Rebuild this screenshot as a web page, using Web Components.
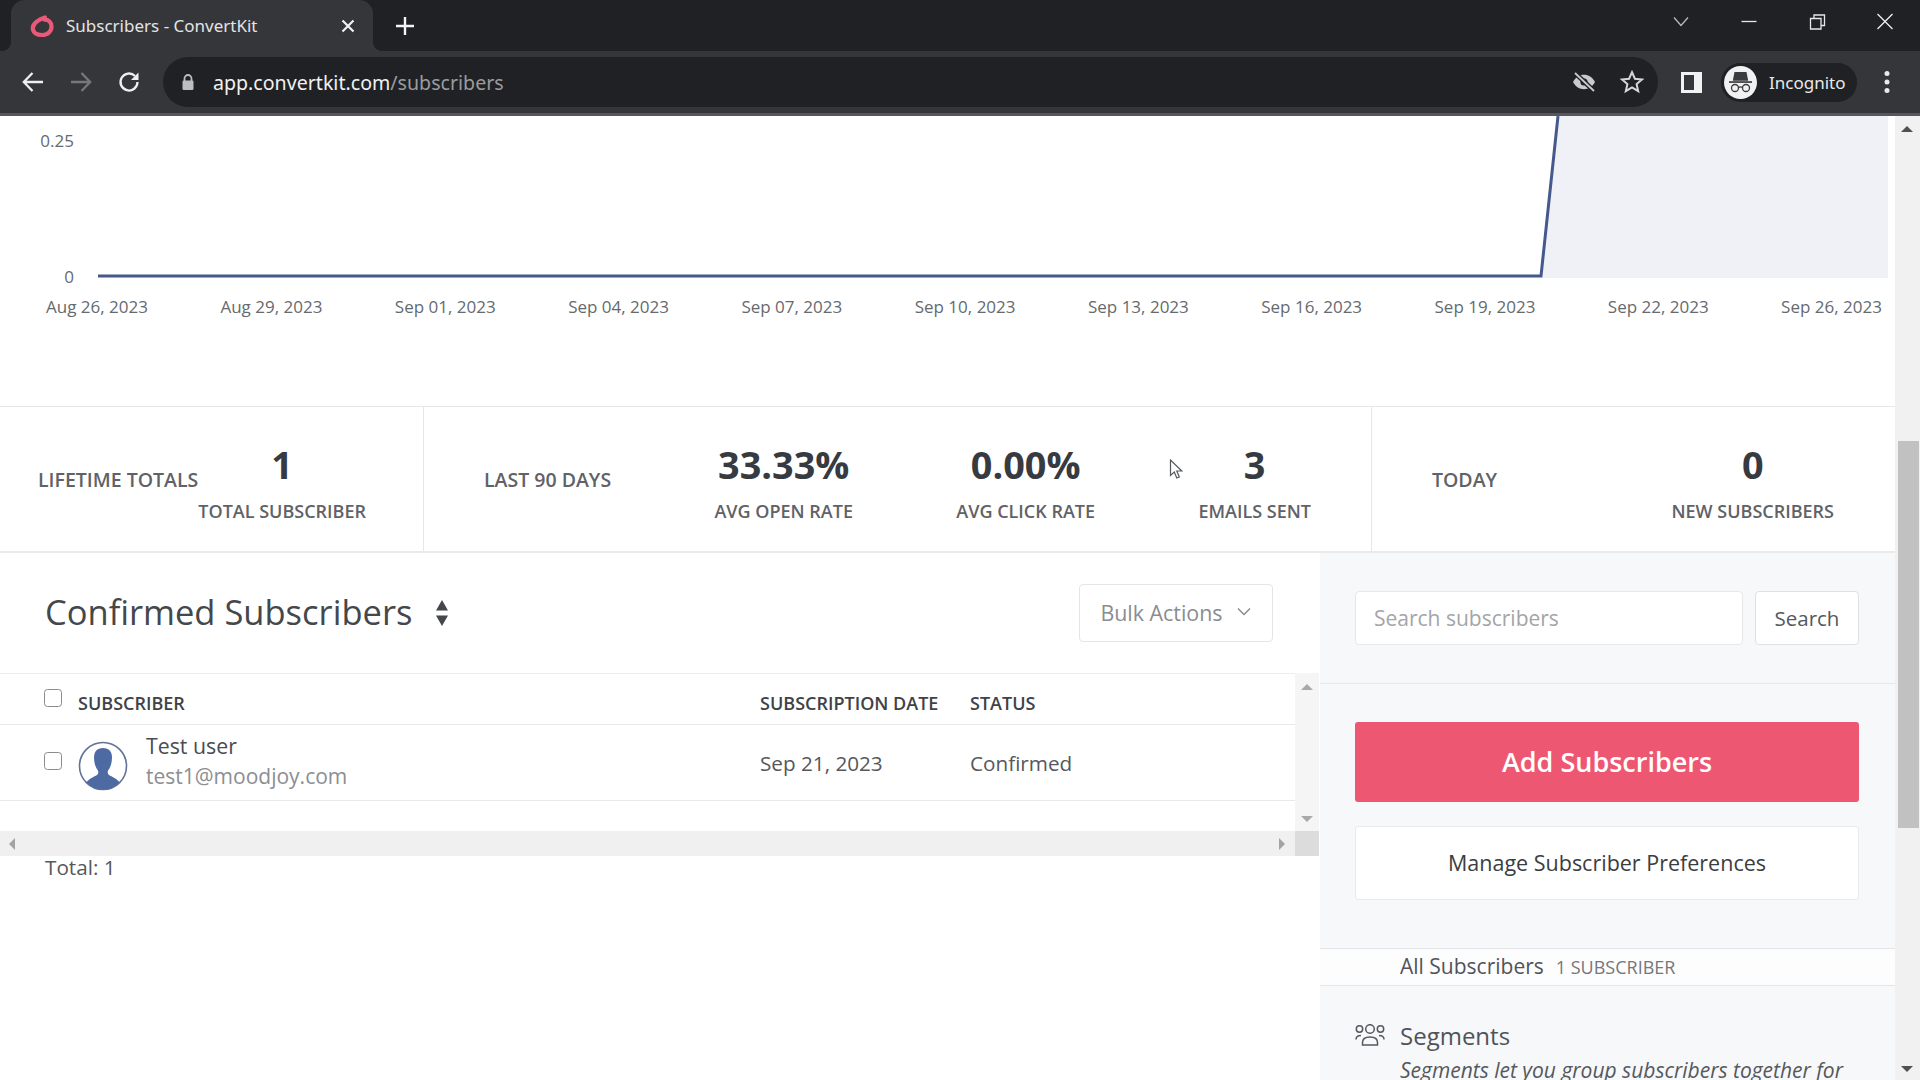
<!DOCTYPE html>
<html lang="en">
<head>
<meta charset="utf-8">
<title>Subscribers - ConvertKit</title>
<style>
html,body{margin:0;padding:0;height:100%;overflow:hidden;background:#fff;font-family:"Open Sans",sans-serif}
</style>
</head>
<body>
<app-shell></app-shell>
<script>
function def(name, html){
  customElements.define(name, class extends HTMLElement{
    constructor(){super();const r=this.attachShadow({mode:'open'});r.innerHTML=html;}
  });
}
function defAttr(name, fn){
  customElements.define(name, class extends HTMLElement{
    connectedCallback(){ if(this.shadowRoot) return; const r=this.attachShadow({mode:'open'}); r.innerHTML=fn(this); }
  });
}

def('browser-tabstrip',`<style>
:host{display:flex;height:51px;background:#202124;align-items:stretch;color:#e8eaed;font:16px "Noto Sans","Open Sans",sans-serif;flex:none}
.tab{margin-left:11px;width:362px;background:#35363a;border-radius:14px 14px 0 0;display:flex;align-items:center;position:relative;box-sizing:border-box;padding-left:19px}
.tab::before,.tab::after{content:"";position:absolute;bottom:0;width:10px;height:10px;background:radial-gradient(circle at 0 0,#202124 10px,#35363a 10.5px)}
.tab::before{left:-10px}
.tab::after{right:-10px;background:radial-gradient(circle at 100% 0,#202124 10px,#35363a 10.5px)}
.fav{width:24px;height:24px;flex:none}
.title{margin-left:12px;flex:1;white-space:nowrap;font-size:17px;color:#e3e4e6}
.x{width:16px;height:16px;margin-right:17px;flex:none}
.plus{margin-left:22px;align-self:center;width:20px;height:20px;flex:none}
.sp{flex:1}
.win{display:flex;align-items:flex-start;padding-right:23px}
.win svg{display:block;width:24px;height:24px;margin-top:10px}
.win svg+svg{margin-left:44.5px}
</style>
<div class="tab">
<svg class="fav" viewBox="0 0 24 24"><path d="M15 3.500C10 5 2.800 9 2.800 14c0 4.500 4 7 9.200 7 6 0 9.500-4 9.500-8.500 0-4-3-6.800-7-6.800" fill="none" stroke="#ea5a78" stroke-width="4.200" stroke-linecap="round"/></svg>
<span class="title">Subscribers - ConvertKit</span>
<svg class="x" viewBox="0 0 16 16"><path d="M2.500 2.500l11 11M13.500 2.500l-11 11" stroke="#f1f1f2" stroke-width="2.200" fill="none"/></svg>
</div>
<svg class="plus" viewBox="0 0 20 20"><path d="M10 1v18M1 10h18" stroke="#f4f4f5" stroke-width="2.400" fill="none"/></svg>
<div class="sp"></div>
<div class="win">
<svg viewBox="0 0 24 24"><path d="M5 7.500l7 8 7-8" stroke="#bdbec0" stroke-width="1.200" fill="none"/></svg>
<svg viewBox="0 0 24 24"><path d="M4.500 11.500h15" stroke="#e8e8e9" stroke-width="1.300" fill="none"/></svg>
<svg viewBox="0 0 24 24" style="margin-left:43.500px"><path d="M5.500 8.500h10.500v10.500H5.500zM9 8.500V5h10.500v10.500H16" stroke="#e8e8e9" stroke-width="1.300" fill="none"/></svg>
<svg viewBox="0 0 24 24"><path d="M4.500 4l15 15M19.500 4l-15 15" stroke="#efeff0" stroke-width="1.300" fill="none"/></svg>
</div>`);

def('browser-toolbar',`<style>
:host{display:flex;height:62px;background:#35363a;border-bottom:3px solid #56575a;align-items:center;font:19.600px "Noto Sans","Open Sans",sans-serif;flex:none;position:relative}
.nav{width:24px;height:24px;flex:none}
.omni{margin-left:22px;width:1495px;height:50px;flex:none;box-sizing:border-box;border-radius:25px;background:#202124;display:flex;align-items:center;padding-left:17px}
.lock{width:16px;height:18px;flex:none}
.url{margin-left:17px;color:#f0f1f1;flex:1;white-space:nowrap}
.url span{color:#9b9c9f}
.eye{width:26px;height:26px;flex:none;margin-right:22px}
.star{width:26px;height:26px;flex:none;margin-right:13px}
.side{width:21px;height:21px;flex:none;margin-left:23px}
.pill{margin-left:19px;width:136px;height:39px;border-radius:20px;background:#202124;display:flex;align-items:center;flex:none;font-size:17px;color:#e8e9ea}
.av{width:33px;height:33px;margin-left:3px;flex:none}
.pill span{margin-left:12px}
.dots{width:6px;height:24px;margin-left:27px;flex:none}
</style>
<svg class="nav" style="margin-left:21px" viewBox="0 0 24 24"><path d="M22 12H3M11.500 3L2.800 12l8.700 9" stroke="#eeeff0" stroke-width="2.300" fill="none"/></svg>
<svg class="nav" style="margin-left:24px" viewBox="0 0 24 24"><path d="M2 12h19M12.500 3l8.700 9-8.700 9" stroke="#77787b" stroke-width="2.300" fill="none"/></svg>
<svg class="nav" style="margin-left:24px" viewBox="0 0 24 24"><path d="M20.500 12a8.500 8.500 0 1 1-2.500-6" stroke="#eeeff0" stroke-width="2.300" fill="none"/><path d="M21.500 2.500v7.500H14z" fill="#eeeff0"/></svg>
<div class="omni">
<svg class="lock" viewBox="0 0 16 18"><path d="M4.500 8V5.500a3.500 3.500 0 0 1 7 0V8" stroke="#bdbec0" stroke-width="1.800" fill="none"/><rect x="2.500" y="7.500" width="11" height="9.500" rx="1.300" fill="#bdbec0"/></svg>
<div class="url">app.convertkit.com<span>/subscribers</span></div>
<svg class="eye" viewBox="0 0 26 26"><path d="M2 13c2.800-4.800 6.500-7.200 11-7.200S21.200 8.200 24 13c-2.800 4.800-6.500 7.200-11 7.200S4.800 17.800 2 13z" fill="#c9cacc"/><circle cx="13" cy="13" r="3.600" fill="#202124"/><path d="M4 4l19 18" stroke="#202124" stroke-width="4.500"/><path d="M4 4l19 18" stroke="#c9cacc" stroke-width="1.800"/></svg>
<svg class="star" viewBox="0 0 26 26"><path d="M13 3.200l2.900 6.500 7.100.7-5.400 4.700 1.600 7-6.200-3.700-6.200 3.700 1.600-7L3 10.400l7.100-.7z" stroke="#d6d7d8" stroke-width="2" fill="none"/></svg>
</div>
<svg class="side" viewBox="0 0 21 21"><path fill-rule="evenodd" d="M0 0h21v21H0zM3 3v15h10V3z" fill="#f2f2f3"/></svg>
<div class="pill">
<svg class="av" viewBox="0 0 33 33"><circle cx="16.500" cy="16.500" r="16.500" fill="#f1f1f2"/><path d="M10.500 6h12l1.700 8.700H8.800z" fill="#3a3b3e"/><rect x="5" y="15.200" width="23" height="1.700" fill="#3a3b3e"/><circle cx="11" cy="22" r="3.500" fill="none" stroke="#3a3b3e" stroke-width="1.300"/><circle cx="22" cy="22" r="3.500" fill="none" stroke="#3a3b3e" stroke-width="1.300"/><path d="M14.500 21.500c1.200-.7 2.800-.7 4 0" stroke="#3a3b3e" stroke-width="1.200" fill="none"/></svg>
<span>Incognito</span>
</div>
<svg class="dots" viewBox="0 0 6 24"><circle cx="3" cy="3.500" r="2.500" fill="#eaeaeb"/><circle cx="3" cy="12" r="2.500" fill="#eaeaeb"/><circle cx="3" cy="20.500" r="2.500" fill="#eaeaeb"/></svg>`);

def('page-scrollbar',`<style>
:host{display:flex;flex-direction:column;width:25px;background:#f1f1f1;flex:none;align-items:center;box-sizing:border-box}
.a{width:0;height:0;flex:none;border-left:6px solid transparent;border-right:6px solid transparent;margin-left:-2px}
.up{border-bottom:6px solid #505050;margin-top:10px}
.thumb{width:21px;height:387px;background:#c1c1c1;margin-top:309px;flex:none;margin-left:2px}
.dn{border-top:6px solid #505050;margin-top:auto;margin-bottom:8px}
</style><div class="a up"></div><div class="thumb"></div><div class="a dn"></div>`);

const dates=['Aug 26, 2023','Aug 29, 2023','Sep 01, 2023','Sep 04, 2023','Sep 07, 2023','Sep 10, 2023','Sep 13, 2023','Sep 16, 2023','Sep 19, 2023','Sep 22, 2023','Sep 26, 2023'];
def('sub-chart',`<style>
:host{display:block;height:290px;border-bottom:1px solid #e6e7e8;box-sizing:content-box;font:17px "Open Sans",sans-serif;color:#666a6e;flex:none;overflow:hidden}
svg{display:block;width:1895px;height:172px}
text{font:17px "Open Sans",sans-serif;fill:#666a6e}
.dates{display:flex;justify-content:space-between;padding:7px 13px 0 46px;white-space:nowrap;line-height:23px}
</style>
<svg viewBox="0 0 1895 172">
<polygon points="1541,162 1558,0 1888,0 1888,162" fill="#f0f1f6"/>
<text x="74" y="31" text-anchor="end">0.25</text>
<text x="74" y="167" text-anchor="end">0</text>
<polyline points="98,160 1541,160 1558,0" fill="none" stroke="#46598c" stroke-width="3"/>
</svg>
<div class="dates">${dates.map(d=>`<span>${d}</span>`).join('')}</div>`);

defAttr('stat-item',el=>`<style>
:host{display:flex;flex-direction:column;align-items:center;white-space:nowrap;color:#5f6266}
b{font:700 37.800px/52px "Open Sans",sans-serif;color:#373a40;display:block;height:52px}
span{font:600 18px/22px "Open Sans",sans-serif;margin-top:9px;color:#5f6266}
</style><b>${el.getAttribute('value')}</b><span>${el.getAttribute('label')}</span>`);

def('stat-group',`<style>
:host{display:flex;align-items:center;justify-content:space-between;box-sizing:border-box;padding:0 60px;height:100%;font:600 19.500px "Open Sans",sans-serif;color:#5f6266;white-space:nowrap;border-right:1px solid #e6e7e8}
:host([first]){padding-left:38px;width:424px;flex:none}
:host([mid]){width:948px;flex:none}
:host([last]){flex:1;border-right:0;padding-right:61px}
::slotted(stat-item){margin-top:3px}
</style><slot></slot>`);

def('stats-bar',`<style>
:host{display:flex;height:144px;border-bottom:2px solid #e9eaeb;flex:none;box-sizing:content-box}
</style><slot></slot>`);

def('subscribers-panel',`<style>
:host{display:block;width:1320px;flex:none;font-family:"Open Sans",sans-serif;color:#47494d}
.head{height:120px;box-sizing:border-box;display:flex;align-items:center;padding:0 47px 3px 45px}
h1{margin:0;font:400 34.500px/44px "Open Sans",sans-serif;color:#44474b;white-space:nowrap}
.sort{width:14px;height:26px;margin-left:23px;flex:none;margin-top:3px}
.bulk{margin-left:auto;width:194px;height:58px;box-sizing:border-box;border:1px solid #e4e5e7;border-radius:4px;display:flex;align-items:center;justify-content:center;gap:13px;font-size:21.400px;color:#8a8c90;padding-bottom:2px;margin-top:3px}
.bulk svg{width:16px;height:10px}
.tablewrap{display:flex;height:158px}
.table{width:1295px;flex:none}
.row{display:grid;grid-template-columns:78px 682px 210px 1fr;border-bottom:1px solid #e8e9ea;align-items:center;box-sizing:border-box}
.row.h{height:52px;border-top:1px solid #eceded;font:600 18px/22px "Open Sans",sans-serif;color:#3f4246;padding-top:7px}
.row.b{height:76px;font-size:20.700px;color:#55585c}
.cb{width:18px;height:18px;box-sizing:border-box;border:1.500px solid #8b8b8b;border-radius:3.500px;margin-left:44px;background:#fff}
.row.h .cb{margin-top:-10px}
.row.b .cb{margin-top:-3px}
.user{display:flex;align-items:center}
.user svg{width:50px;height:50px;flex:none;margin-top:7px}
.nm{margin-left:18px;line-height:30px}
.nm b{display:block;font-weight:400;color:#4a4c50;margin-top:-4px;font-size:21.300px}
.nm i{display:block;font-style:normal;color:#8c8e92;font-size:21px}
.vs{width:24px;background:#f5f5f6;display:flex;flex-direction:column;align-items:center;flex:none;height:158px;margin-right:1px}
.vs .a{width:0;height:0;border-left:6px solid transparent;border-right:6px solid transparent}
.vs .a.u{border-bottom:6px solid #a9a9a9;margin-top:11px}
.vs .a.d{border-top:6px solid #a9a9a9;margin-top:auto;margin-bottom:9px}
.hs{display:flex;height:25px;background:#f0f0f0;width:1319px}
.hs .t{flex:1;display:flex;align-items:center;justify-content:space-between;padding:0 35px 0 9px}
.hs .a{width:0;height:0;border-top:6px solid transparent;border-bottom:6px solid transparent}
.hs .l{border-right:6px solid #a3a3a3}
.hs .r{border-left:6px solid #a3a3a3;margin-right:-25px}
.hs .c{width:24px;background:#dcdcdc}
.tot{padding-left:45px;font-size:20.700px;line-height:24px;margin-top:-1px;color:#55585c}
</style>
<div class="head">
<h1>Confirmed Subscribers</h1>
<svg class="sort" viewBox="0 0 14 26"><path d="M7 0l6 10.500H1zM7 26l6-10.500H1z" fill="#44474b"/></svg>
<div class="bulk">Bulk Actions <svg viewBox="0 0 16 10"><path d="M2 1.500l6 6 6-6" fill="none" stroke="#8a8c90" stroke-width="1.500"/></svg></div>
</div>
<div class="tablewrap">
<div class="table">
<div class="row h"><div class="cb"></div><div>SUBSCRIBER</div><div>SUBSCRIPTION DATE</div><div>STATUS</div></div>
<div class="row b"><div class="cb"></div><div class="user">
<svg viewBox="0 0 50 50"><defs><clipPath id="c"><circle cx="25" cy="25" r="23.500"/></clipPath></defs><circle cx="25" cy="25" r="23.500" fill="#fff" stroke="#617397" stroke-width="1.600"/><path clip-path="url(#c)" d="M25 7c-6 0-9 3.800-9 9.500 0 5 1.300 9.500 3.800 12.800 .7 .9 .7 3.300-.3 4.200C17 36 7 37.500 4 50h42c-3-12.500-13-14-15.500-16.500-1-.9-1-3.300-.3-4.200C32.700 26 34 21.500 34 16.500 34 10.800 31 7 25 7z" fill="#4d6aa3"/></svg>
<div class="nm"><b>Test user</b><i>test1@moodjoy.com</i></div></div>
<div>Sep 21, 2023</div><div>Confirmed</div></div>
</div>
<div class="vs"><div class="a u"></div><div class="a d"></div></div>
</div>
<div class="hs"><div class="t"><div class="a l"></div><div class="a r"></div></div><div class="c"></div></div>
<div class="tot">Total: 1</div>`);

def('subscribers-sidebar',`<style>
:host{display:block;flex:1;min-width:0;background:#f7f8fa;font-family:"Open Sans",sans-serif;color:#47494d;height:100%;overflow:hidden}
.search{height:131px;box-sizing:border-box;border-bottom:1px solid #e6e7ea;display:flex;padding:38px 36px 0 35px;gap:12px;align-items:flex-start}
.input{width:388px;height:54px;box-sizing:border-box;background:#fff;border:1px solid #e6e7ea;border-radius:4px;display:flex;align-items:center;padding:0 0 1px 18px;font-size:21px;color:#a3a5a9}
.btn{flex:1;height:54px;box-sizing:border-box;background:#fff;border:1px solid #dfe0e3;border-radius:4px;display:flex;align-items:center;justify-content:center;font-size:20.500px;color:#55585c;padding-bottom:1px}
.acts{padding:38px 36px 0 35px;display:flex;flex-direction:column}
.add{height:80px;background:#ee5771;color:#fff;border-radius:3px;display:flex;align-items:center;justify-content:center;font-weight:600;font-size:27px;padding-bottom:2px;box-sizing:border-box}
.mg{height:74px;margin-top:24px;background:#fff;border:1px solid #e9eaec;border-radius:3px;box-sizing:border-box;display:flex;align-items:center;justify-content:center;font-size:21.500px;color:#3b3d41;font-weight:500;padding-bottom:1px}
.all{margin-top:48px;height:38px;box-sizing:border-box;background:#fdfdfe;border-top:1px solid #e4e5e8;border-bottom:1px solid #e4e5e8;display:flex;align-items:center;padding:0 0 2px 80px;font-size:21px;color:#50535a;white-space:nowrap}
.all small{font-size:18px;margin-left:12px;color:#74777b;margin-top:2px}
.seg{display:flex;align-items:center;margin-top:32px;padding-left:35px;font-size:24px;line-height:36px;color:#50535a}
.seg svg{width:30px;height:22px;flex:none;margin-right:15px;margin-top:-3px}
.note{padding-left:80px;font-style:italic;font-size:21px;line-height:30px;color:#55585c;white-space:nowrap;margin-top:1px}
</style>
<div class="search"><div class="input">Search subscribers</div><div class="btn">Search</div></div>
<div class="acts"><div class="add">Add Subscribers</div><div class="mg">Manage Subscriber Preferences</div></div>
<div class="all">All Subscribers<small>1 SUBSCRIBER</small></div>
<div class="seg"><svg viewBox="0 0 30 22" fill="none" stroke="#55585c" stroke-width="1.500"><circle cx="15" cy="5" r="4.300"/><circle cx="4.500" cy="5" r="3.200"/><circle cx="25.500" cy="5" r="3.200"/><path d="M7.500 21v-2.500c0-4 3-5.500 7.500-5.500s7.500 1.500 7.500 5.500V21zM1 15.500c0-2.500 2-4 5-4M29 15.500c0-2.500-2-4-5-4"/></svg>Segments</div>
<div class="note">Segments let you group subscribers together for</div>`);

def('subscribers-page',`<style>
:host{display:flex;flex:1;min-height:0;overflow:hidden;background:#fff}
.col{flex:1;min-width:0;display:flex;flex-direction:column}
.split{display:flex;flex:1;min-height:0}
.cursor{position:absolute;left:1169px;top:459px;width:14px;height:21px;pointer-events:none}
</style>
<div class="col"><sub-chart></sub-chart>
<stats-bar>
<stat-group first>LIFETIME TOTALS<stat-item value="1" label="TOTAL SUBSCRIBER"></stat-item></stat-group>
<stat-group mid>LAST 90 DAYS<stat-item value="33.33%" label="AVG OPEN RATE"></stat-item><stat-item value="0.00%" label="AVG CLICK RATE"></stat-item><stat-item value="3" label="EMAILS SENT"></stat-item></stat-group>
<stat-group last>TODAY<stat-item value="0" label="NEW SUBSCRIBERS"></stat-item></stat-group>
</stats-bar>
<div class="split"><subscribers-panel></subscribers-panel><subscribers-sidebar></subscribers-sidebar></div>
</div>
<page-scrollbar></page-scrollbar>
<svg class="cursor" viewBox="0 0 14 21"><path d="M1.500 1v15.500l3.800-3.500 2.500 6 2.500-1-2.500-6h5z" fill="#fff" stroke="#55585f" stroke-width="1.200"/></svg>`);

def('app-shell',`<style>
:host{display:flex;flex-direction:column;height:1080px;width:1920px;overflow:hidden;position:relative}
</style><browser-tabstrip></browser-tabstrip><browser-toolbar></browser-toolbar><subscribers-page></subscribers-page>`);
</script>
</body>
</html>
